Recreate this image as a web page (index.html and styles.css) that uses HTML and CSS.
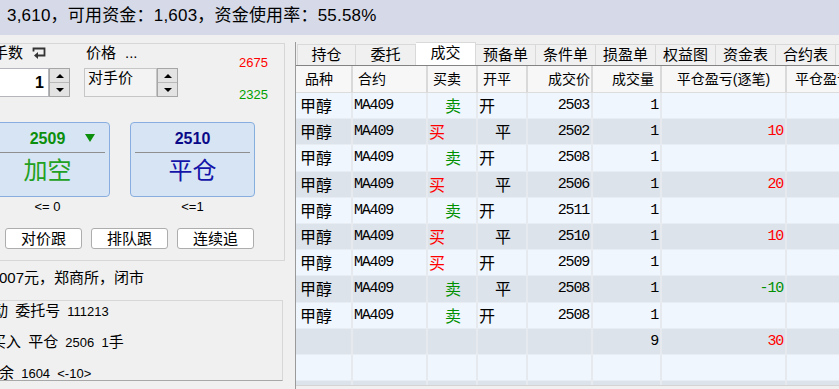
FILE: index.html
```html
<!DOCTYPE html>
<html lang="zh-CN">
<head>
    <meta charset="UTF-8">
    <title>成交</title>
    <link rel="stylesheet" href="styles.css">
</head>
<body>
    <div class="topbar">3,610，可用资金：1,603，资金使用率：55.58%</div>

    <div class="main">
        <aside class="order">
            <div class="order-box">
                <div class="order-head">
                    <div class="qty">
                        <div class="field-label">手数
                            <svg class="return-icon" width="14" height="13" viewBox="0 0 14 13">
                                <path d="M1.5 4.5 V1.5 H12.5 V8.5 H5" fill="none" stroke="#333" stroke-width="1.8"/>
                                <path d="M6 5 L2 8.5 L6 12 Z" fill="#333"/>
                            </svg>
                        </div>
                        <div class="spin">
                            <div class="spin-input">1</div>
                            <div class="spin-btns">
                                <span class="spin-btn"><i class="arrow-up"></i></span>
                                <span class="spin-btn"><i class="arrow-down"></i></span>
                            </div>
                        </div>
                    </div>
                    <div class="price">
                        <div class="field-label">价格<span class="dots">...</span></div>
                        <div class="spin">
                            <div class="combo-text">对手价</div>
                            <div class="spin-btns">
                                <span class="spin-btn"><i class="arrow-up"></i></span>
                                <span class="spin-btn"><i class="arrow-down"></i></span>
                            </div>
                        </div>
                    </div>
                    <div class="limits">
                        <span class="limit-up">2675</span>
                        <span class="limit-down">2325</span>
                    </div>
                </div>

                <div class="trade-btns">
                    <div class="trade-btn sell">
                        <div class="trade-price">2509</div>
                        <span class="tri-down"></span>
                        <div class="trade-rule"></div>
                        <div class="trade-name">加空</div>
                    </div>
                    <div class="trade-btn close">
                        <div class="trade-price">2510</div>
                        <div class="trade-rule"></div>
                        <div class="trade-name">平仓</div>
                    </div>
                </div>
                <div class="limit-notes">
                    <span>&lt;= 0</span>
                    <span>&lt;=1</span>
                </div>
                <div class="follow-btns">
                    <button class="follow-btn">对价跟</button>
                    <button class="follow-btn">排队跟</button>
                    <button class="follow-btn">连续追</button>
                </div>
            </div>

            <div class="status">007元，郑商所，闭市</div>

            <div class="msg-box">
                <div class="msg-line first">动 委托号 <span class="msg-num">111213</span></div>
                <div class="msg-line second">买入 平仓 <span class="msg-num">2506</span> <span class="msg-num">1</span>手</div>
                <div class="msg-line third">剩余 <span class="msg-num">1604</span> <span class="msg-num">&lt;-10&gt;</span></div>
            </div>
        </aside>

        <section class="trades">
            <div class="tabs">
                <div class="tab">持仓</div>
                <div class="tab">委托</div>
                <div class="tab active">成交</div>
                <div class="tab">预备单</div>
                <div class="tab">条件单</div>
                <div class="tab">损盈单</div>
                <div class="tab">权益图</div>
                <div class="tab">资金表</div>
                <div class="tab">合约表</div>
                <div class="tab">成交表</div>
            </div>

            <div class="grid">
                <div class="row head">
                    <div class="cell first">品种</div>
                    <div class="cell">合约</div>
                    <div class="cell">买卖</div>
                    <div class="cell">开平</div>
                    <div class="cell r">成交价</div>
                    <div class="cell r qty-h">成交量</div>
                    <div class="cell c">平仓盈亏(逐笔)</div>
                    <div class="cell last">平仓盈亏(盯市)</div>
                </div>

                <div class="row">
                    <div class="cell cn name">甲醇</div><div class="cell">MA409</div>
                    <div class="cell cn ind sell">卖</div><div class="cell cn">开</div>
                    <div class="cell r">2503</div><div class="cell r">1</div>
                    <div class="cell r"></div><div class="cell"></div>
                </div>
                <div class="row alt">
                    <div class="cell cn name">甲醇</div><div class="cell">MA409</div>
                    <div class="cell cn buy">买</div><div class="cell cn ind">平</div>
                    <div class="cell r">2502</div><div class="cell r">1</div>
                    <div class="cell r gain">10</div><div class="cell"></div>
                </div>
                <div class="row">
                    <div class="cell cn name">甲醇</div><div class="cell">MA409</div>
                    <div class="cell cn ind sell">卖</div><div class="cell cn">开</div>
                    <div class="cell r">2508</div><div class="cell r">1</div>
                    <div class="cell r"></div><div class="cell"></div>
                </div>
                <div class="row alt">
                    <div class="cell cn name">甲醇</div><div class="cell">MA409</div>
                    <div class="cell cn buy">买</div><div class="cell cn ind">平</div>
                    <div class="cell r">2506</div><div class="cell r">1</div>
                    <div class="cell r gain">20</div><div class="cell"></div>
                </div>
                <div class="row">
                    <div class="cell cn name">甲醇</div><div class="cell">MA409</div>
                    <div class="cell cn ind sell">卖</div><div class="cell cn">开</div>
                    <div class="cell r">2511</div><div class="cell r">1</div>
                    <div class="cell r"></div><div class="cell"></div>
                </div>
                <div class="row alt">
                    <div class="cell cn name">甲醇</div><div class="cell">MA409</div>
                    <div class="cell cn buy">买</div><div class="cell cn ind">平</div>
                    <div class="cell r">2510</div><div class="cell r">1</div>
                    <div class="cell r gain">10</div><div class="cell"></div>
                </div>
                <div class="row">
                    <div class="cell cn name">甲醇</div><div class="cell">MA409</div>
                    <div class="cell cn buy">买</div><div class="cell cn">开</div>
                    <div class="cell r">2509</div><div class="cell r">1</div>
                    <div class="cell r"></div><div class="cell"></div>
                </div>
                <div class="row alt">
                    <div class="cell cn name">甲醇</div><div class="cell">MA409</div>
                    <div class="cell cn ind sell">卖</div><div class="cell cn ind">平</div>
                    <div class="cell r">2508</div><div class="cell r">1</div>
                    <div class="cell r loss">-10</div><div class="cell"></div>
                </div>
                <div class="row">
                    <div class="cell cn name">甲醇</div><div class="cell">MA409</div>
                    <div class="cell cn ind sell">卖</div><div class="cell cn">开</div>
                    <div class="cell r">2508</div><div class="cell r">1</div>
                    <div class="cell r"></div><div class="cell"></div>
                </div>
                <!-- totals -->
                <div class="row alt">
                    <div class="cell"></div><div class="cell"></div>
                    <div class="cell"></div><div class="cell"></div>
                    <div class="cell"></div><div class="cell r">9</div>
                    <div class="cell r gain">30</div><div class="cell"></div>
                </div>
                <div class="row">
                    <div class="cell"></div><div class="cell"></div>
                    <div class="cell"></div><div class="cell"></div>
                    <div class="cell"></div><div class="cell"></div>
                    <div class="cell"></div><div class="cell"></div>
                </div>
                <div class="row alt">
                    <div class="cell"></div><div class="cell"></div>
                    <div class="cell"></div><div class="cell"></div>
                    <div class="cell"></div><div class="cell"></div>
                    <div class="cell"></div><div class="cell"></div>
                </div>
            </div>
        </section>
    </div>
</body>
</html>
```

FILE: styles.css
```css
/* trade terminal - fills list */
* {
    box-sizing: border-box;
}

body {
    margin: 0;
    width: 839px;
    height: 389px;
    overflow: hidden;
    background: #f0f0f0;
    color: #000;
    font-family: "Liberation Sans", "Noto Sans CJK SC", sans-serif;
}

.topbar {
    height: 35px;
    padding-left: 7px;
    background: #d6dae8;
    font-size: 17px;
    line-height: 32px;
    white-space: nowrap;
    letter-spacing: 0.2px;
}

.main {
    display: flex;
    height: 354px;
}

/* ---- order panel ---- */
.order {
    width: 295px;
    flex: none;
    overflow: hidden;
}

.order-box {
    height: 218px;
    margin: 8px 10px 0 0;
    border: 1px solid #d7d7d7;
    border-left: none;
}

.order-head {
    display: flex;
    height: 53px;
}

.qty {
    width: 96px;
    flex: none;
    margin-left: -12px;
}

.price {
    width: 155px;
    flex: none;
}

.field-label {
    display: flex;
    align-items: center;
    height: 18px;
    font-size: 15px;
    line-height: 18px;
    white-space: nowrap;
}

.qty .field-label {
    padding-left: 5px;
}

.price .field-label {
    padding-left: 2px;
}

.return-icon {
    margin-left: 9px;
}

.dots {
    margin-left: 9px;
}

.spin {
    display: flex;
    height: 29px;
    margin-top: 6px;
}

.spin-input {
    width: 61px;
    padding-right: 4px;
    background: #fff;
    border: 1px solid #b4b6bb;
    font-size: 16px;
    font-weight: bold;
    line-height: 27px;
    text-align: right;
}

.combo-text {
    width: 73px;
    padding-left: 3px;
    background: #f3f3f3;
    border: 1px solid #c6c6c6;
    font-size: 15px;
    line-height: 18px;
}

.spin-btns {
    width: 21px;
    display: flex;
    flex-direction: column;
    border: 1px solid #a6a6a6;
}

.spin-btn {
    flex: 1;
    display: flex;
    align-items: center;
    justify-content: center;
    background: #e3e3e3;
}

.spin-btn + .spin-btn {
    border-top: 1px solid #b9b9b9;
}

.arrow-up,
.arrow-down {
    width: 0;
    height: 0;
    border-left: 4px solid transparent;
    border-right: 4px solid transparent;
}

.arrow-up {
    border-bottom: 4px solid #000;
}

.arrow-down {
    border-top: 4px solid #000;
}

.limits {
    display: flex;
    flex-direction: column;
    gap: 16px;
    padding-top: 11px;
    font-size: 13px;
    line-height: 16px;
}

.limit-up {
    color: #ff0000;
}

.limit-down {
    color: #00a000;
}

.trade-btns {
    display: flex;
    gap: 20px;
    margin: 25px 0 0 -15px;
}

.trade-btn {
    position: relative;
    width: 125px;
    height: 75px;
    background: #d7e4f3;
    border: 1px solid #88aee0;
    border-radius: 4px;
    text-align: center;
}

.trade-price {
    margin-top: 6px;
    font-size: 16px;
    font-weight: bold;
    line-height: 20px;
}

.tri-down {
    position: absolute;
    top: 11px;
    right: 14px;
    width: 0;
    height: 0;
    border-left: 5px solid transparent;
    border-right: 5px solid transparent;
    border-top: 8px solid #0c8f0c;
}

.trade-rule {
    height: 1px;
    margin: 3px 4px 0 4px;
    background: #8f8f8f;
}

.trade-name {
    margin-top: 3px;
    font-size: 24px;
    line-height: 30px;
}

.sell .trade-price {
    color: #0c8f0c;
}

.sell .trade-name {
    color: #22a022;
}

.close .trade-price {
    color: #0a0a88;
}

.close .trade-name {
    color: #1414a8;
}

.limit-notes {
    display: flex;
    gap: 20px;
    margin: 2px 0 0 -15px;
    font-size: 13px;
    line-height: 16px;
}

.limit-notes span {
    width: 125px;
    text-align: center;
}

.follow-btns {
    display: flex;
    gap: 9px;
    margin: 13px 0 0 5px;
}

.follow-btn {
    width: 77px;
    height: 21px;
    padding: 0;
    background: #fff;
    border: 1px solid #adadad;
    border-radius: 3px;
    font-family: inherit;
    font-size: 15px;
    line-height: 19px;
    color: #000;
}

.status {
    margin: 7px 0 0 -1px;
    font-size: 15px;
    line-height: 20px;
    white-space: nowrap;
}

.msg-box {
    height: 81px;
    margin: 12px 12px 0 0;
    border-top: 1px solid #d7d7d7;
    border-right: 1px solid #d7d7d7;
    border-bottom: 1px solid #a8a8a8;
    overflow: hidden;
    font-size: 15px;
}

.msg-line {
    height: 20px;
    line-height: 20px;
    white-space: nowrap;
    word-spacing: 3px;
}

.msg-line + .msg-line {
    margin-top: 11px;
}

.msg-line.first {
    margin-left: -7px;
}

.msg-line.second {
    margin-left: -9px;
}

.msg-line.third {
    margin-left: -16px;
}

.msg-num {
    font-size: 13px;
}

/* ---- trades list ---- */
.trades {
    flex: 1;
    min-width: 0;
    margin-top: 7px;
    border-left: 1px solid #9a9a9a;
    overflow: hidden;
}

.tabs {
    display: flex;
    align-items: flex-end;
    height: 21px;
    margin-top: 2px;
    padding-left: 1px;
}

.tab {
    flex: none;
    width: 60px;
    height: 21px;
    background: #f0f0f0;
    border-top: 1px solid #d9d9d9;
    border-right: 1px solid #d9d9d9;
    font-size: 15px;
    line-height: 19px;
    text-align: center;
    white-space: nowrap;
}

.tab:first-child {
    width: 59px;
    border-left: 1px solid #d9d9d9;
}

.tab.active {
    height: 23px;
    background: #fff;
}

.grid {
    height: 321px;
    background: #f0f6fd;
    border-top: 1px solid #838383;
    border-bottom: 1px solid #d4d4d4;
    overflow: hidden;
}

.row {
    display: grid;
    grid-template-columns: 57px 75px 50px 50px 65px 69px 125px 120px;
    height: 26.2px;
    border-bottom: 1px solid #e8edf3;
}

.row.alt {
    background: #dde3ea;
}

.cell {
    padding: 0 1px;
    border-right: 2px solid #e6eaef;
    font-family: "Liberation Mono", "Noto Sans CJK SC", monospace;
    font-size: 15px;
    letter-spacing: -1.2px;
    line-height: 25px;
    white-space: nowrap;
    overflow: hidden;
}

.cell.r {
    padding-right: 2px;
}

.cell.cn {
    font-family: "Noto Sans CJK SC", sans-serif;
    font-size: 16px;
    letter-spacing: 0;
}

.cell.name {
    padding-left: 4px;
}

.cell.ind {
    padding-left: 17px;
}

.r {
    text-align: right;
}

.c {
    text-align: center;
}

.buy,
.gain {
    color: #ff0000;
}

.sell,
.loss {
    color: #009000;
}

.row.head {
    height: 27px;
    background: #f7f7f7;
    border-bottom: 1px solid #dcdcdc;
}

.head .cell {
    padding: 0 5px;
    border-right-color: #d9d9d9;
    font-family: "Liberation Sans", "Noto Sans CJK SC", sans-serif;
    font-size: 14px;
    letter-spacing: 0;
    line-height: 26px;
}

.head .cell.first {
    padding-left: 9px;
}

.head .cell.r {
    padding-right: 1px;
}

.head .cell.qty-h {
    padding-right: 6px;
}

.head .cell.last {
    padding-left: 8px;
}
```
